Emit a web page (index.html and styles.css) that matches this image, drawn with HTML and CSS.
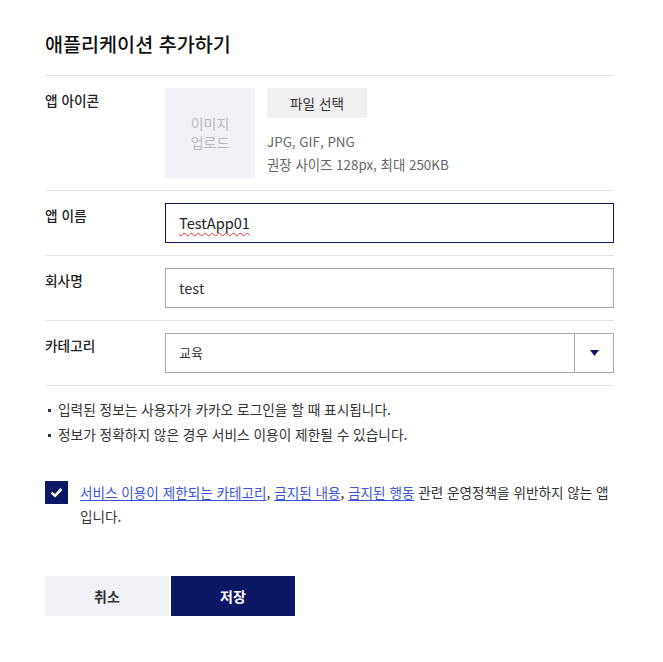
FILE: index.html
```html
<!DOCTYPE html>
<html lang="ko">
<head>
  <meta charset="UTF-8">
  <title>애플리케이션 추가하기</title>
  <link rel="stylesheet" href="styles.css">
</head>
<body>

<div class="wrap">
  <h1 class="title">애플리케이션 추가하기</h1>

  <div class="row">
    <div class="label">앱 아이콘</div>
    <div class="icon-field">
      <div class="upload">이미지<br>업로드</div>
      <div class="icon-info">
        <div class="file-btn">파일 선택</div>
        <p class="hint">JPG, GIF, PNG<br>권장 사이즈 128px, 최대 250KB</p>
      </div>
    </div>
  </div>

  <div class="row">
    <div class="label">앱 이름</div>
    <div class="input focus"><span class="typo">TestApp01</span></div>
  </div>

  <div class="row">
    <div class="label">회사명</div>
    <div class="input">test</div>
  </div>

  <div class="row">
    <div class="label">카테고리</div>
    <div class="input select">
      <span class="select-value">교육</span>
      <span class="select-arrow">
        <svg width="9" height="6" viewBox="0 0 9 6"><path d="M0 0H9L4.5 6Z" fill="#0c1766"/></svg>
      </span>
    </div>
  </div>

  <ul class="notes">
    <li>입력된 정보는 사용자가 카카오 로그인을 할 때 표시됩니다.</li>
    <li>정보가 정확하지 않은 경우 서비스 이용이 제한될 수 있습니다.</li>
  </ul>

  <div class="agree">
    <span class="check">
      <svg width="13" height="11" viewBox="0 0 13 11"><path d="M1.5 5.6L5 8.8L11.5 2" fill="none" stroke="#fff" stroke-width="2.6"/></svg>
    </span>
    <p><a href="#">서비스 이용이 제한되는 카테고리</a>, <a href="#">금지된 내용</a>, <a href="#">금지된 행동</a> 관련 운영정책을 위반하지 않는 앱 입니다.</p>
  </div>

  <div class="actions">
    <button class="btn cancel">취소</button>
    <button class="btn save">저장</button>
  </div>
</div>

</body>
</html>
```

FILE: styles.css
```css
body {
  margin: 0;
  background: #fff;
  font-family: "Noto Sans CJK KR", "Noto Sans", sans-serif;
  color: #222;
}
.wrap {
  width: 569px;
  padding: 30px 0 0 45px;
}
.title {
  margin: 0;
  font-size: 19.6px;
  font-weight: 500;
  line-height: 28px;
  color: #111;
  padding-bottom: 17px;
  border-bottom: 1px solid #e3e3e6;
}
.row {
  display: flex;
  padding: 12px 0;
  border-bottom: 1px solid #e6e6e8;
}
.label {
  width: 120px;
  flex-shrink: 0;
  font-size: 13.7px;
  font-weight: 500;
  line-height: 24px;
  color: #222;
}
.icon-field { display: flex; gap: 12px; }
.upload {
  width: 90px;
  height: 90px;
  background: #f1f2f7;
  color: #b9bac0;
  font-size: 14px;
  line-height: 19px;
  display: flex;
  align-items: center;
  justify-content: center;
  text-align: center;
}
.file-btn {
  width: 100px;
  height: 30px;
  line-height: 30px;
  text-align: center;
  background: #f0f0f0;
  font-size: 13.6px;
  color: #333;
}
.hint {
  margin: 12px 0 0;
  font-size: 13.4px;
  line-height: 23px;
  color: #666;
}
.input {
  flex: 1;
  height: 38px;
  border: 1px solid #aaa;
  padding: 0 14px 0 13px;
  font-size: 14.6px;
  line-height: 38px;
  color: #333;
  display: flex;
  align-items: center;
}
.input.focus { border-color: #0c1766; color: #222; }
.typo {
  text-decoration: underline wavy #ee3333;
  text-decoration-thickness: 1px;
  text-underline-offset: 3px;
}
.select { padding-right: 0; font-size: 13px; }
.select-value { flex: 1; }
.select-arrow {
  width: 38px;
  height: 38px;
  border-left: 1px solid #aaa;
  display: flex;
  align-items: center;
  justify-content: center;
}
.select-arrow svg { display: block; }
.notes {
  list-style: none;
  margin: 11px 0 0;
  padding: 0;
  font-size: 13.7px;
  line-height: 25px;
  color: #333;
}
.notes li { position: relative; padding-left: 13px; }
.notes li::before {
  content: "";
  position: absolute;
  left: 3px;
  top: 12px;
  width: 3px;
  height: 3px;
  background: #333;
}
.agree {
  display: flex;
  gap: 12px;
  margin-top: 33px;
}
.check {
  width: 23px;
  height: 23px;
  flex-shrink: 0;
  background: #0c1766;
  display: flex;
  align-items: center;
  justify-content: center;
  margin-top: 1px;
}
.agree p {
  margin: 0;
  font-size: 13.6px;
  line-height: 24px;
  color: #333;
}
.agree a { color: #3a55d9; text-decoration: underline; text-underline-offset: 2px; }
.actions {
  display: flex;
  gap: 2px;
  margin-top: 48px;
}
.btn {
  width: 124px;
  height: 40px;
  border: none;
  font-family: inherit;
  font-size: 14px;
  font-weight: 700;
  cursor: pointer;
}
.cancel { background: #f1f2f7; color: #333; }
.save { background: #0c1766; color: #fff; }
```
